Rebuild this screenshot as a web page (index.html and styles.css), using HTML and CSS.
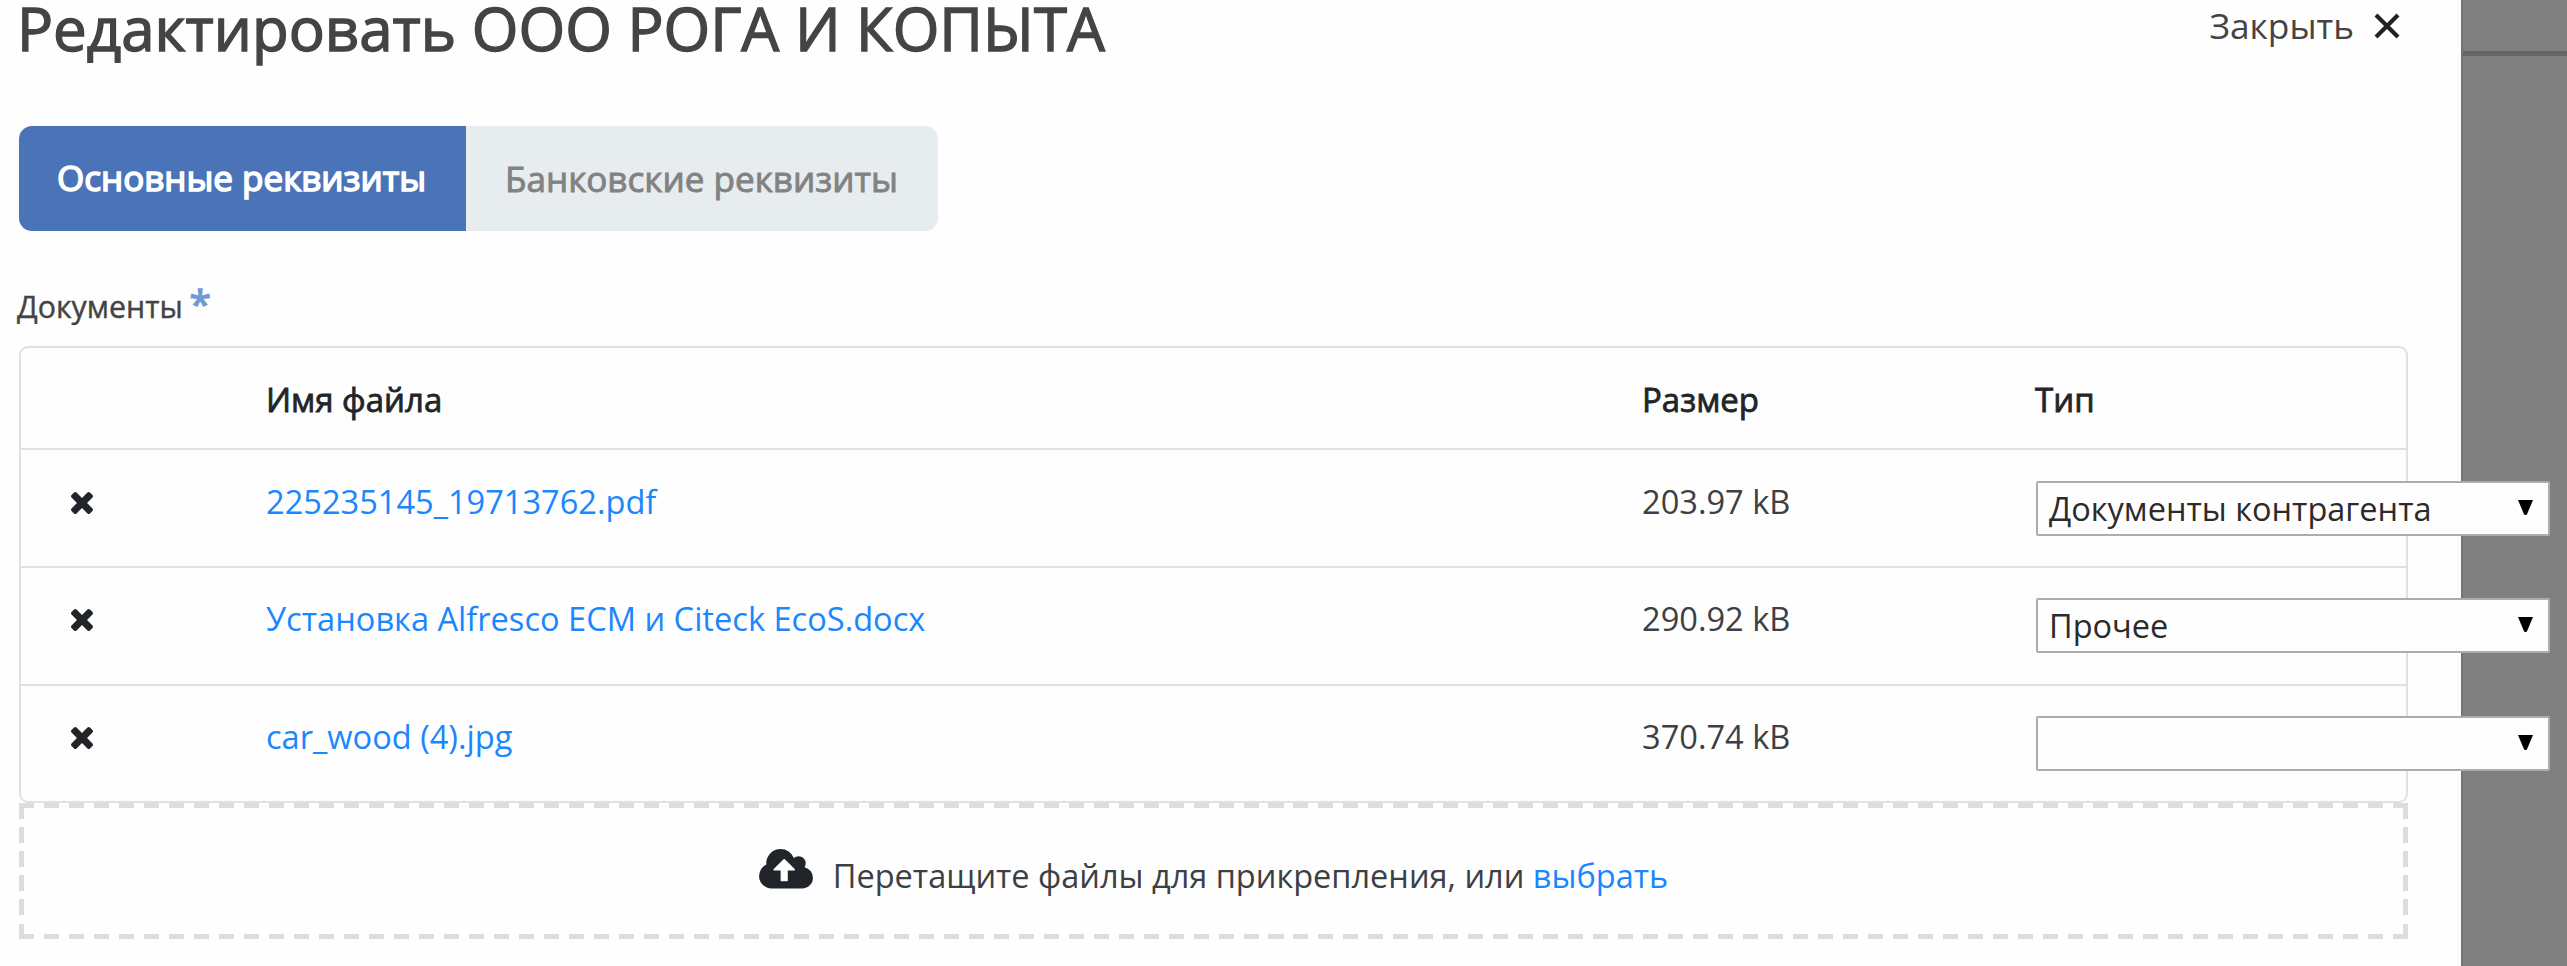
FILE: index.html
```
<!DOCTYPE html>
<html lang="ru">
<head>
<meta charset="utf-8">
<title>Редактировать ООО РОГА И КОПЫТА</title>
<link rel="stylesheet" href="styles.css">
</head>
<body>
<svg class="sprite" aria-hidden="true">
  <symbol id="times" viewBox="110 366 1188 1188" preserveAspectRatio="none">
    <path d="M1298 1322q0 40-28 68l-136 136q-28 28-68 28t-68-28l-294-294-294 294q-28 28-68 28t-68-28l-136-136q-28-28-28-68t28-68l294-294-294-294q-28-28-28-68t28-68l136-136q28-28 68-28t68 28l294 294 294-294q28-28 68-28t68 28l136 136q28 28 28 68t-28 68l-294 294 294 294q28 28 28 68z"/>
  </symbol>
  <symbol id="arrow" viewBox="0 0 15 15">
    <path d="M0 0H15L9 14.2Q7.5 16 6 14.2Z"/>
  </symbol>
</svg>
<div class="page">
  <main class="panel">
    <header class="header">
      <h1 class="title">Редактировать ООО РОГА И КОПЫТА</h1>
      <button class="close" type="button">
        <span>Закрыть</span>
        <svg class="close-icon" viewBox="0 0 26 26"><path d="M2 2L24 24M24 2L2 24"/></svg>
      </button>
    </header>
    <nav class="tabs">
      <a class="tab tab-active">Основные реквизиты</a>
      <a class="tab">Банковские реквизиты</a>
    </nav>
    <div class="label">Документы <span class="required">*</span></div>
    <section class="table">
      <div class="row head">
        <span></span><span>Имя файла</span><span>Размер</span><span>Тип</span>
      </div>
      <div class="row">
        <svg class="remove"><use href="#times"/></svg>
        <a class="link">225235145_19713762.pdf</a>
        <span class="size">203.97 kB</span>
        <div class="select"><span>Документы контрагента</span><svg class="arrow"><use href="#arrow"/></svg></div>
      </div>
      <div class="row">
        <svg class="remove"><use href="#times"/></svg>
        <a class="link">Установка Alfresco ECM и Citeck EcoS.docx</a>
        <span class="size">290.92 kB</span>
        <div class="select"><span>Прочее</span><svg class="arrow"><use href="#arrow"/></svg></div>
      </div>
      <div class="row">
        <svg class="remove"><use href="#times"/></svg>
        <a class="link">car_wood (4).jpg</a>
        <span class="size">370.74 kB</span>
        <div class="select"><span></span><svg class="arrow"><use href="#arrow"/></svg></div>
      </div>
    </section>
    <section class="dropzone">
      <svg class="cloud" viewBox="0 -1408 1920 1408"><path transform="scale(1,-1)" fill-rule="evenodd" d="M1280 672q0 14 -9 23l-352 352q-9 9 -23 9t-23 -9l-351 -351q-10 -12 -10 -24q0 -14 9 -23t23 -9h224v-352q0 -13 9.5 -22.5t22.5 -9.5h192q13 0 22.5 9.5t9.5 22.5v352h224q13 0 22.5 9.5t9.5 22.5zM1920 384q0 -159 -112.5 -271.5t-271.5 -112.5h-1088q-185 0 -316.5 131.5t-131.5 316.5q0 130 70 240t188 165q-2 30 -2 43q0 212 150 362t362 150q156 0 285.5 -87t188.5 -231q71 62 166 62q106 0 181 -75t75 -181q0 -76 -41 -138q130 -31 213.5 -135.5t83.5 -238.5z"/></svg>
      <span class="hint">Перетащите файлы для прикрепления, или <a class="link">выбрать</a></span>
    </section>
  </main>
  <aside class="backdrop"></aside>
</div>
</body>
</html>
```

FILE: styles.css
```
* { box-sizing: border-box; }

body {
  margin: 0;
  overflow: hidden;
  background: #808080;
  color: #212529;
  font: 32.6px/44px "Open Sans", "Noto Sans", sans-serif;
}

.sprite { display: none; }

.page {
  display: flex;
  height: 966px;
}

.panel {
  flex: none;
  width: 2461px;
  padding-left: 19px;
  background: #fefefe;
  position: relative;
  z-index: 1;
}

.backdrop {
  flex: 1;
  border-left: 2px solid #747474;
  background: linear-gradient(#666, #666) 0 51px / 100% 5px no-repeat #808080;
}

.header {
  display: flex;
  justify-content: space-between;
  align-items: flex-start;
  height: 126px;
  padding-right: 61px;
}

.title {
  margin: 0 0 0 -2px;
  font-size: 60px;
  line-height: 57px;
  font-weight: 400;
  color: #444;
  -webkit-text-stroke: 1.4px #444;
}

.close {
  display: flex;
  gap: 20px;
  padding: 0;
  border: 0;
  background: none;
  font: 35.3px/51px "Open Sans", "Noto Sans", sans-serif;
  color: #444;
}

.close-icon {
  width: 26px;
  height: 26px;
  margin-top: 13px;
  fill: none;
  stroke: #222;
  stroke-width: 4.2;
}

.tabs {
  display: flex;
  height: 105px;
}

.tab {
  width: 472px;
  padding-left: 39px;
  border-radius: 0 13px 13px 0;
  background: #e7ecef;
  color: #828282;
  font-size: 35.1px;
  line-height: 104px;
  -webkit-text-stroke: 0.9px #828282;
}

.tab-active {
  width: 447px;
  padding-left: 38px;
  border-radius: 13px 0 0 13px;
  background: #4b73b8;
  color: #fff;
  font-size: 35px;
  -webkit-text-stroke: 1.6px #fff;
}

.label {
  height: 40px;
  margin: 56px 0 19px -2px;
  font-size: 30.3px;
  line-height: 40px;
  color: #444;
  -webkit-text-stroke: 0.4px #444;
}

.required {
  margin-left: -1px;
  font-size: 39px;
  line-height: 0;
  color: #7399d3;
  -webkit-text-stroke: 1.4px #7399d3;
}

.table {
  width: 2389px;
  height: 457px;
  border: 2px solid #e1e1e1;
  border-radius: 9px;
}

.row {
  display: grid;
  grid-template-columns: 245px 1376px 393px 515px;
  align-items: start;
  height: 117.6px;
  padding-top: 29.5px;
  border-bottom: 2px solid #e1e1e1;
}

.row:last-child { border-bottom: 0; }

.head {
  height: 102.4px;
  font-size: 33px;
  -webkit-text-stroke: 0.8px #212529;
}

.link { color: #1a87ff; }

.size { color: #3c4044; }

.remove {
  width: 22px;
  height: 22px;
  margin: 12px 0 0 50px;
  fill: #212529;
}

.select {
  display: flex;
  justify-content: space-between;
  height: 55px;
  margin: 1px 0 0 1px;
  padding: 4px 15px 0 11px;
  border: 2px solid #adadad;
  border-radius: 2px;
  background: #fefefe;
  color: #2b2b2b;
  font-size: 32.5px;
}

.arrow {
  width: 15px;
  height: 15px;
  margin-top: 13px;
  fill: #000;
}

.dropzone {
  display: flex;
  justify-content: center;
  gap: 20px;
  width: 2389px;
  height: 136px;
  padding-top: 51px;
  background:
    repeating-linear-gradient(90deg, #ddd 0 15px, transparent 15px 24.99px) 0 0 / 100% 5px no-repeat,
    repeating-linear-gradient(90deg, #ddd 0 15px, transparent 15px 24.99px) 0 100% / 100% 5px no-repeat,
    repeating-linear-gradient(#ddd 0 15.5px, transparent 15.5px 24.1px) 0 0 / 5px 100% no-repeat,
    repeating-linear-gradient(#ddd 0 15.5px, transparent 15.5px 24.1px) 100% 0 / 5px 100% no-repeat;
}

.hint {
  color: #3c4044;
  font-size: 32.5px;
}

.cloud {
  width: 54px;
  height: 39.5px;
  margin-top: -5px;
  fill: #212529;
}
```
